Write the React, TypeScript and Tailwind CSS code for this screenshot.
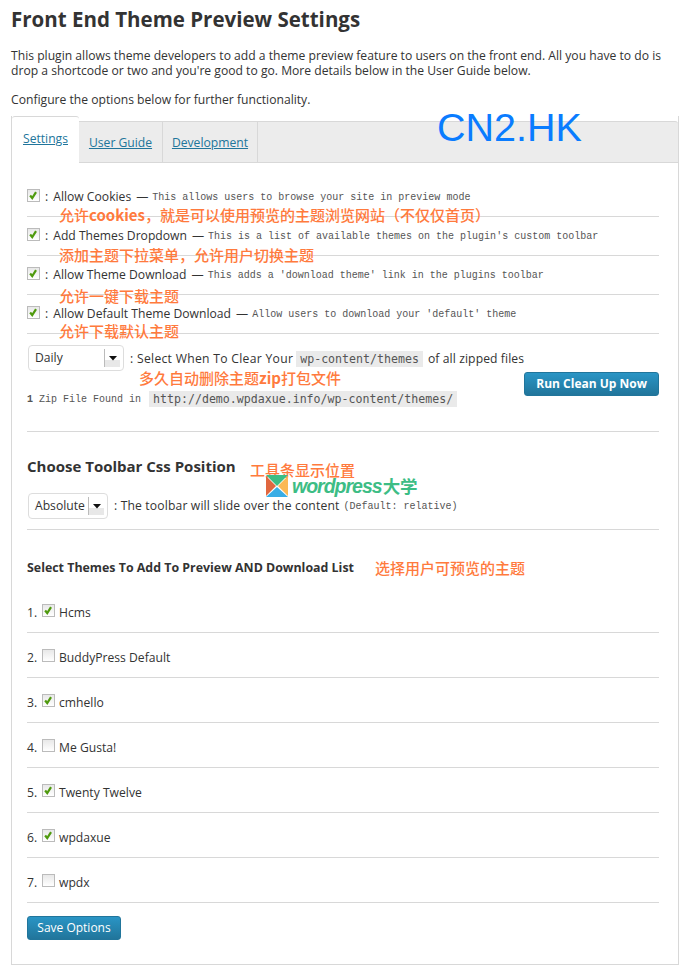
import type { ReactNode } from "react";

const cjk = "font-['Noto_Sans_CJK_SC',sans-serif] font-medium text-[15px] leading-[20px] text-[#ff7a3d] whitespace-nowrap absolute";
const desc = "font-['Liberation_Mono',monospace] text-[10px] text-[#555]";
const code = "font-['DejaVu_Sans_Mono',monospace] text-[11.6px] leading-[14px] bg-[#eaeaea] px-1 py-px text-[#555]";

function Check({ on }: { on: boolean }) {
  return (
    <span className="relative inline-block w-[13px] h-[13px] shrink-0 border border-[#bbb] bg-gradient-to-b from-[#e8e8e8] to-white">
      {on && (
        <svg viewBox="0 0 13 13" className="absolute left-0 top-0 w-[11px] h-[11px]">
          <path d="M2.5 6.5 L5 9.5 L9.5 2.5" fill="none" stroke="#4f9a0e" strokeWidth="2.6" />
        </svg>
      )}
    </span>
  );
}

function OptionRow({ label, text }: { label: string; text: string }) {
  return (
    <div className="h-[39px] border-b border-[#d8d8d8] flex items-start pt-[11px] whitespace-nowrap">
      <Check on />
      <span className="ml-[5px] leading-[15px]">:</span>
      <span className="ml-[5px] leading-[15px]">{label}</span>
      <span className="ml-[5px] leading-[15px]">—</span>
      <span className={`${desc} ml-[4px] leading-[15px] mt-px`}>{text}</span>
    </div>
  );
}

function FakeSelect({ width, children }: { width: string; children: ReactNode }) {
  return (
    <div className={`${width} h-[26px] ml-px border border-[#ddd] rounded-[4px] bg-white flex items-center justify-between shrink-0`}>
      <span className="pl-[6px]">{children}</span>
      <span className="w-[16px] h-[18px] mr-[3px] pl-[4px] border-l border-[#bbb] bg-gradient-to-b from-white from-60% to-[#e8e8e8] to-60% flex items-center">
        <svg viewBox="0 0 8 5" className="w-[8px] h-[5px]">
          <path d="M0 0 H8 L4 4.5 Z" fill="#111" />
        </svg>
      </span>
    </div>
  );
}

function BlueButton({ children, className }: { children: ReactNode; className: string }) {
  return (
    <button className={`h-[24px] rounded-[3px] border border-[#21759b] bg-gradient-to-b from-[#2a95c5] to-[#21759b] text-white text-[12px] ${className}`}>
      {children}
    </button>
  );
}

const themes = [
  { name: "Hcms", on: true },
  { name: "BuddyPress Default", on: false },
  { name: "cmhello", on: true },
  { name: "Me Gusta!", on: false },
  { name: "Twenty Twelve", on: true },
  { name: "wpdaxue", on: true },
  { name: "wpdx", on: false },
];

export default function App() {
  return (
    <div className="relative w-[684px] h-[972px] bg-white px-[11px] overflow-hidden font-['Open_Sans',sans-serif] text-[12.15px] text-[#333]">
      <h1 className="pt-[6px] text-[20.5px] leading-[27px] font-bold">Front End Theme Preview Settings</h1>

      <p className="mt-[15px] leading-[15px] whitespace-nowrap">
        This plugin allows theme developers to add a theme preview feature to users on the front end. All you have to do is
        <br />
        drop a shortcode or two and you're good to go. More details below in the User Guide below.
      </p>
      <p className="mt-[14px] leading-[15px]">Configure the options below for further functionality.</p>

      {/* TABS */}
      <div className="mt-[9px] relative w-[668px] h-[849px] border-x border-b border-[#d8d8d8]">
        <div className="h-[47px] flex items-end">
          <div className="w-[67px] h-[47px] bg-white border-t border-[#d8d8d8] rounded-t-[3px] -mr-px relative flex items-center justify-center pb-[2px]">
            <a className="text-[#21759b] underline">Settings</a>
          </div>
          <div className="flex-1 h-[42px] bg-[#ececec] border-t border-b border-l border-[#d8d8d8] rounded-tr-[3px] flex">
            <a className="w-[84px] pt-[3px] flex items-center justify-center border-r border-[#d8d8d8] text-[#21759b] underline">User Guide</a>
            <a className="w-[95px] pt-[3px] flex items-center justify-center border-r border-[#d8d8d8] text-[#21759b] underline">Development</a>
          </div>
        </div>

        <div className="pl-[15px] pr-[19px] pt-[15px]">
          <OptionRow label="Allow Cookies" text="This allows users to browse your site in preview mode" />
          <OptionRow label="Add Themes Dropdown" text="This is a list of available themes on the plugin's custom toolbar" />
          <OptionRow label="Allow Theme Download" text="This adds a 'download theme' link in the plugins toolbar" />
          <OptionRow label="Allow Default Theme Download" text="Allow users to download your 'default' theme" />

          <div className="mt-[11px] flex items-center whitespace-nowrap">
            <FakeSelect width="w-[96px]">Daily</FakeSelect>
            <span className="ml-[6px] mt-[2px] tracking-[0.3px]">: Select When To Clear Your</span>
            <code className={`${code} ml-[3px] mt-[2px]`}>wp-content/themes</code>
            <span className="ml-[5px] mt-[2px] tracking-[0.1px]">of all zipped files</span>
          </div>

          <div className="flex justify-end mt-px">
            <BlueButton className="px-[11px] font-bold">Run Clean Up Now</BlueButton>
          </div>

          <div className="-mt-[5px] flex items-center whitespace-nowrap">
            <span className={desc}><b>1</b> Zip File Found in</span>
            <code className={`${code} ml-[8px]`}>http://demo.wpdaxue.info/wp-content/themes/</code>
          </div>

          <div className="mt-[24px] border-t border-[#d8d8d8]" />

          <h3 className="mt-[24px] text-[15px] leading-[20px] font-bold">Choose Toolbar Css Position</h3>
          <div className="mt-[17px] flex items-center whitespace-nowrap">
            <FakeSelect width="w-[80px]">Absolute</FakeSelect>
            <span className="ml-[6px] tracking-[0.15px]">: The toolbar will slide over the content</span>
            <span className={`${desc} ml-[4px]`}>(Default: relative)</span>
          </div>

          <div className="mt-[10px] border-t border-[#d8d8d8]" />

          <h4 className="mt-[29px] text-[12.4px] leading-[17px] font-bold">Select Themes To Add To Preview AND Download List</h4>

          <div className="mt-[12px]">
            {themes.map((t, i) => (
              <div key={t.name} className="h-[45px] border-b border-[#d8d8d8] flex items-start pt-[16px] whitespace-nowrap">
                <span className="w-[15px]">{i + 1}.</span>
                <Check on={t.on} />
                <span className="ml-[4px]">{t.name}</span>
              </div>
            ))}
          </div>

          <div className="mt-[13px]">
            <BlueButton className="w-[94px]">Save Options</BlueButton>
          </div>
        </div>
      </div>

      {/* WATERMARKS */}
      <span className="absolute left-[437px] top-[104px] font-['Liberation_Sans',sans-serif] text-[39.5px] leading-[46px] text-[#0a7cff]">CN2.HK</span>
      <span className={`${cjk} left-[59px] top-[205px]`}>允许<b>cookies</b>，就是可以使用预览的主题浏览网站（不仅仅首页）</span>
      <span className={`${cjk} left-[59px] top-[245px]`}>添加主题下拉菜单，允许用户切换主题</span>
      <span className={`${cjk} left-[59px] top-[286px]`}>允许一键下载主题</span>
      <span className={`${cjk} left-[59px] top-[321px]`}>允许下载默认主题</span>
      <span className={`${cjk} left-[139px] top-[368px]`}>多久自动删除主题<b>zip</b>打包文件</span>
      <span className={`${cjk} left-[250px] top-[460px]`}>工具条显示位置</span>
      <span className={`${cjk} left-[375px] top-[558px]`}>选择用户可预览的主题</span>

      <div className="absolute left-[266px] top-[475px] flex items-center">
        <svg viewBox="0 0 22 22" className="w-[22px] h-[22px]">
          <path d="M0 0 H22 L11 11 Z" fill="#3dbd85" />
          <path d="M0 1 L10 11 L0 21 Z" fill="#e0673f" />
          <path d="M22 1 L12 11 L22 21 Z" fill="#fbb955" />
          <path d="M0 22 H22 L11 12 Z" fill="#3aade5" />
        </svg>
        <span className="ml-[4px] font-['Liberation_Sans',sans-serif] italic font-bold text-[19.5px] leading-[22px] tracking-[-1px] text-[#3dbd85]">wordpress</span>
        <span className="ml-px font-['Noto_Sans_CJK_SC',sans-serif] font-bold text-[17.5px] leading-[22px] text-[#3dbd85]">大学</span>
      </div>
    </div>
  );
}
